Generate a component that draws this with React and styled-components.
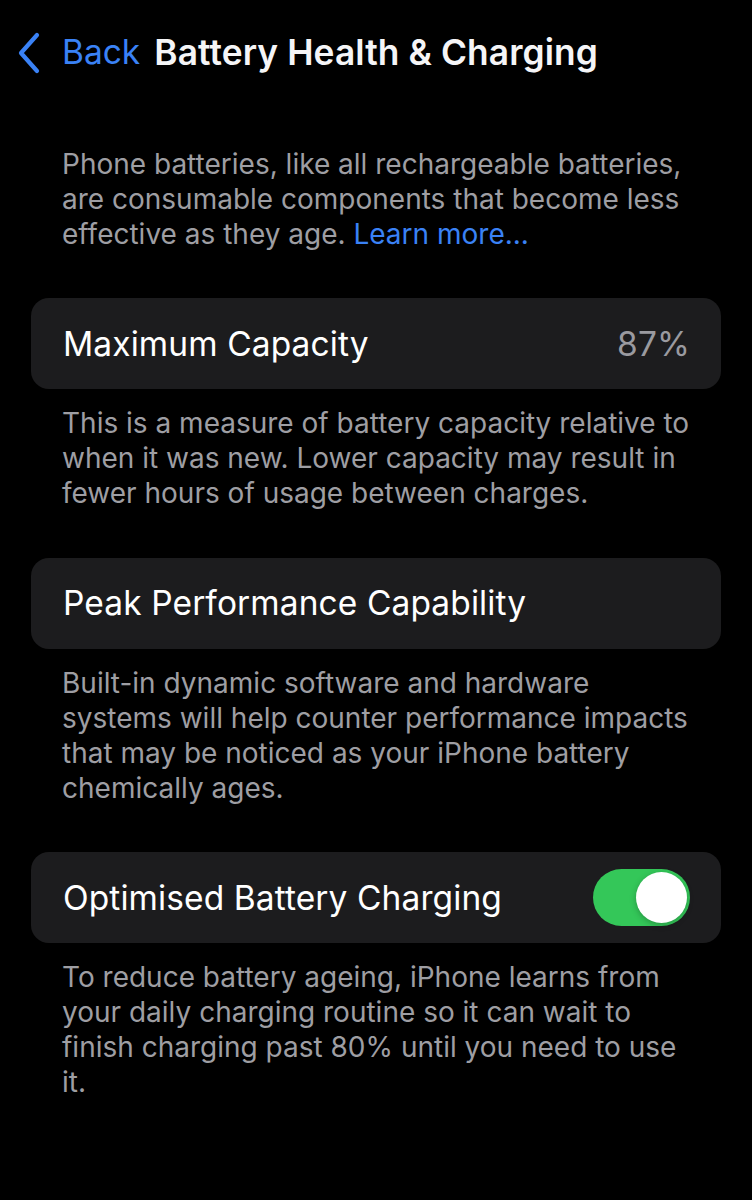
import styled, { createGlobalStyle } from "styled-components";

const GlobalStyle = createGlobalStyle`
  html, body {
    margin: 0;
    padding: 0;
    background: #000000;
  }
  body {
    font-family: Inter, "Noto Sans", "Liberation Sans", sans-serif;
    -webkit-font-smoothing: antialiased;
  }
`;

export default function App() {
  return (
    <Page>
      <GlobalStyle />
      <Header>
        <BackButton>
          <svg width="26" height="42" viewBox="0 0 26 42" fill="none">
            <path
              d="M21 3 L5 21 L21 39"
              stroke="#3a82f6"
              strokeWidth="4.2"
              strokeLinecap="round"
              strokeLinejoin="round"
            />
          </svg>
          <span>Back</span>
        </BackButton>
        <Title>Battery Health &amp; Charging</Title>
      </Header>

      <Content>
        <Note $top>
          Phone batteries, like all rechargeable batteries, are consumable
          components that become less effective as they age.{" "}
          <Link>Learn more...</Link>
        </Note>

        <Card>
          <Label>Maximum Capacity</Label>
          <Value>87%</Value>
        </Card>
        <Note>
          This is a measure of battery capacity relative to when it was new.
          Lower capacity may result in fewer hours of usage between charges.
        </Note>

        <Card>
          <Label>Peak Performance Capability</Label>
        </Card>
        <Note>
          Built-in dynamic software and hardware systems will help counter
          performance impacts that may be noticed as your iPhone battery
          chemically ages.
        </Note>

        <Card>
          <Label>Optimised Battery Charging</Label>
          <Toggle $on>
            <Knob />
          </Toggle>
        </Card>
        <Note>
          To reduce battery ageing, iPhone learns from your daily charging
          routine so it can wait to finish charging past 80% until you need to
          use it.
        </Note>
      </Content>
    </Page>
  );
}

const Page = styled.div`
  width: 752px;
  min-height: 1200px;
  background: #000000;
  color: #ffffff;
`;

const Header = styled.div`
  height: 104px;
  display: flex;
  align-items: center;
  padding: 0 0 0 16px;
  gap: 14px;
`;

const BackButton = styled.div`
  display: flex;
  align-items: center;
  gap: 20px;
  color: #3a82f6;
  font-size: 33.5px;
  font-weight: 400;

  svg {
    margin-top: 2px;
  }
`;

const Title = styled.div`
  font-size: 35.3px;
  font-weight: 600;
  color: #f5f5f7;
  letter-spacing: 0.1px;
`;

const Content = styled.div`
  padding: 0 31px;
  display: flex;
  flex-direction: column;
`;

const Note = styled.p`
  margin: ${(p) => (p.$top ? "42.5px" : "17px")} 0 46.5px;
  padding: 0 25px 0 31px;
  font-size: 28px;
  line-height: 35px;
  color: #9e9ea3;
  font-weight: 400;
`;

const Link = styled.span`
  color: #3a82f6;
`;

const Card = styled.div`
  height: 91px;
  border-radius: 18px;
  background: #1c1c1e;
  display: flex;
  align-items: center;
  justify-content: space-between;
  padding: 0 31px 0 32px;
`;

const Label = styled.div`
  font-size: 33.5px;
  letter-spacing: 0.1px;
  color: #ffffff;
  font-weight: 400;
`;

const Value = styled.div`
  font-size: 33.5px;
  letter-spacing: 0.1px;
  color: #9a9aa0;
`;

const Toggle = styled.div`
  width: 97px;
  height: 57px;
  border-radius: 29px;
  background: ${(p) => (p.$on ? "#34c759" : "#39393d")};
  display: flex;
  align-items: center;
  justify-content: ${(p) => (p.$on ? "flex-end" : "flex-start")};
  padding: 0 3px;
  box-sizing: border-box;
`;

const Knob = styled.div`
  width: 51px;
  height: 51px;
  border-radius: 50%;
  background: #ffffff;
  box-shadow: 0 2px 6px rgba(0, 0, 0, 0.25);
`;
